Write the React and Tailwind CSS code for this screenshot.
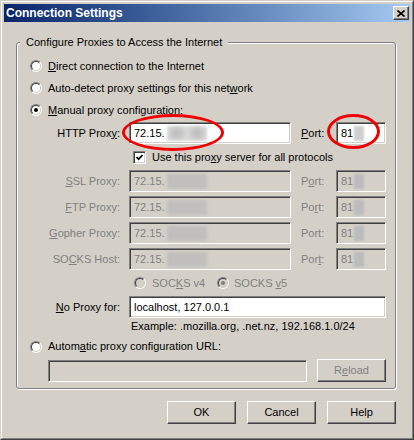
import React from "react";

const Radio = ({ checked, disabled }) => (
  <div className="w-[12px] h-[12px] flex-none rounded-full border border-t-[#808080] border-l-[#808080] border-r-white border-b-white">
    <div
      className={
        "w-full h-full rounded-full border border-t-[#404040] border-l-[#404040] border-r-[#d4d0c8] border-b-[#d4d0c8] flex items-center justify-center " +
        (disabled ? "bg-[#d4d0c8]" : "bg-white")
      }
    >
      {checked && (
        <div className={"w-[4px] h-[4px] rounded-full " + (disabled ? "bg-[#808080]" : "bg-black")} />
      )}
    </div>
  </div>
);

const Field = ({ className, disabled, children }) => (
  <div
    className={
      "h-[22px] flex-none flex items-center pl-[4px] overflow-hidden border border-t-[#808080] border-l-[#808080] border-r-white border-b-white shadow-[inset_1px_1px_0_#404040,inset_-1px_-1px_0_#d4d0c8] " +
      (disabled ? "bg-[#d4d0c8] text-[#808080] " : "bg-white text-black ") +
      className
    }
  >
    {children}
  </div>
);

const HostBlur = ({ disabled }) =>
  disabled ? (
    <span className="ml-[2px] w-[40px] h-[15px] bg-[#c0bfbd] blur-[1.5px] rounded-[2px]" />
  ) : (
    <span className="ml-[2px] w-[40px] h-[15px] bg-[#dadada] blur-[1px] flex items-center justify-around">
      <span className="w-[14px] h-[12px] rounded-full bg-[#c0c0c0] blur-[2px]" />
      <span className="w-[14px] h-[12px] rounded-full bg-[#c0c0c0] blur-[2px]" />
    </span>
  );

const PortBlur = ({ disabled }) => (
  <span
    className={
      "ml-[1px] w-[10px] h-[15px] blur-[1px] " + (disabled ? "bg-[#bcbcbc]" : "bg-[#cfcfcf]")
    }
  />
);

const Button = ({ children, disabled, className }) => (
  <div
    className={
      "h-[23px] flex items-center justify-center bg-[#d4d0c8] border border-t-white border-l-white border-r-[#404040] border-b-[#404040] shadow-[inset_-1px_-1px_0_#808080,inset_1px_1px_0_#d4d0c8] " +
      (disabled ? "text-[#808080] " : "text-black ") +
      className
    }
  >
    {children}
  </div>
);

const ProxyRow = ({ label, portLabel, className, disabled }) => (
  <div className={"h-[22px] flex items-center " + className}>
    <div className={"w-[103px] text-right " + (disabled ? "text-[#808080]" : "text-black")}>{label}</div>
    <Field className="ml-[9px] w-[162px]" disabled={disabled}>
      <span>72.15.</span>
      <HostBlur disabled={disabled} />
    </Field>
    <div className={"ml-[10px] w-[35px] " + (disabled ? "text-[#808080]" : "text-black")}>{portLabel}</div>
    <Field className="w-[50px]" disabled={disabled}>
      <span>81</span>
      <PortBlur disabled={disabled} />
    </Field>
  </div>
);

export default function App() {
  return (
    <div className="relative w-[414px] h-[440px] overflow-hidden font-['Liberation_Sans',Arial,sans-serif] text-[11px] leading-[13px] text-black">
      <div className="w-full h-full bg-[#d4d0c8] border border-t-[#d4d0c8] border-l-[#d4d0c8] border-r-[#404040] border-b-[#404040]">
        <div className="w-full h-full border border-t-white border-l-white border-r-[#808080] border-b-[#808080] p-[2px] flex flex-col">
          {/* Title bar */}
          <div className="h-[18px] flex-none bg-linear-to-r from-[#0a246a] to-[#a6caf0] flex items-center justify-between pl-[2px] pr-[1px]">
            <span className="text-white font-bold text-[12px] leading-[14px]">Connection Settings</span>
            <div className="w-[16px] h-[14px] flex items-center justify-center bg-[#d4d0c8] border border-t-white border-l-white border-r-[#404040] border-b-[#404040] shadow-[inset_-1px_-1px_0_#808080]">
              <svg width="8" height="7" viewBox="0 0 8 7">
                <path d="M0.5 0.5 L7.5 6.5 M7.5 0.5 L0.5 6.5" stroke="#000" strokeWidth="1.6" fill="none" />
              </svg>
            </div>
          </div>

          {/* Group box */}
          <div className="relative mt-[20px] ml-[12px] w-[380px] h-[347px] flex-none rounded-[3px] border border-[#808080] shadow-[inset_1px_1px_0_#fff,1px_1px_0_#fff]">
            <div className="absolute left-[3px] -top-[7px] px-[6px] bg-[#d4d0c8]">
              Configure Proxies to Access the Internet
            </div>
            <div className="flex flex-col pt-[12px]">
              <div className="h-[22px] flex items-center ml-[13px] gap-[6px]">
                <Radio />
                <span>
                  <u>D</u>irect connection to the Internet
                </span>
              </div>
              <div className="h-[22px] flex items-center ml-[13px] gap-[6px]">
                <Radio />
                <span>
                  Auto-detect proxy settings for this net<u>w</u>ork
                </span>
              </div>
              <div className="h-[22px] flex items-center ml-[13px] gap-[6px]">
                <Radio checked />
                <span>
                  <u>M</u>anual proxy configuration:
                </span>
              </div>

              <ProxyRow
                className="mt-[1px]"
                label={
                  <>
                    HTTP Prox<u>y</u>:
                  </>
                }
                portLabel={
                  <>
                    <u>P</u>ort:
                  </>
                }
              />

              <div className="mt-[3px] h-[20px] flex items-center ml-[116px] gap-[6px]">
                <div className="w-[13px] h-[13px] flex-none flex items-center justify-center bg-white border border-t-[#808080] border-l-[#808080] border-r-white border-b-white shadow-[inset_1px_1px_0_#404040,inset_-1px_-1px_0_#d4d0c8]">
                  <svg width="7" height="7" viewBox="0 0 7 7">
                    <path d="M0.5 3 L2.6 5.2 L6.6 1" stroke="#000" strokeWidth="1.7" fill="none" />
                  </svg>
                </div>
                <span>
                  Use this pro<u>x</u>y server for all protocols
                </span>
              </div>

              <ProxyRow
                disabled
                className="mt-[3px]"
                label={
                  <>
                    <u>S</u>SL Proxy:
                  </>
                }
                portLabel={
                  <>
                    P<u>o</u>rt:
                  </>
                }
              />
              <ProxyRow
                disabled
                className="mt-[4px]"
                label={
                  <>
                    <u>F</u>TP Proxy:
                  </>
                }
                portLabel={
                  <>
                    Po<u>r</u>t:
                  </>
                }
              />
              <ProxyRow
                disabled
                className="mt-[4px]"
                label={
                  <>
                    <u>G</u>opher Proxy:
                  </>
                }
                portLabel={<>Port:</>}
              />
              <ProxyRow
                disabled
                className="mt-[4px]"
                label={
                  <>
                    SO<u>C</u>KS Host:
                  </>
                }
                portLabel={
                  <>
                    Por<u>t</u>:
                  </>
                }
              />

              <div className="h-[26px] flex items-center text-[#808080]">
                <div className="ml-[117px] w-[83px] flex items-center gap-[6px]">
                  <Radio disabled />
                  <span>
                    SOC<u>K</u>S v4
                  </span>
                </div>
                <div className="flex items-center gap-[5px]">
                  <Radio disabled checked />
                  <span>
                    SOCKS <u>v</u>5
                  </span>
                </div>
              </div>

              <div className="h-[22px] flex items-center">
                <div className="w-[103px] text-right">
                  <u>N</u>o Proxy for:
                </div>
                <Field className="ml-[9px] w-[257px]">
                  <span>localhost, 127.0.0.1</span>
                </Field>
              </div>

              <div className="h-[16px] flex items-center ml-[114px]">
                Example: .mozilla.org, .net.nz, 192.168.1.0/24
              </div>

              <div className="h-[25px] flex items-center ml-[13px] gap-[6px]">
                <Radio />
                <span>
                  Autom<u>a</u>tic proxy configuration URL:
                </span>
              </div>

              <div className="h-[23px] flex items-center ml-[31px]">
                <Field className="w-[259px]" disabled>
                  <span></span>
                </Field>
                <Button disabled className="ml-[10px] w-[69px]">
                  <span>
                    R<u>e</u>load
                  </span>
                </Button>
              </div>
            </div>
          </div>

          {/* Dialog buttons */}
          <div className="mt-[12px] flex justify-end gap-[11px] pr-[14px]">
            <Button className="w-[69px]">OK</Button>
            <Button className="w-[69px]">Cancel</Button>
            <Button className="w-[69px]">Help</Button>
          </div>
        </div>
      </div>

      {/* Red annotation ellipses */}
      <div className="absolute left-[122px] top-[114px] w-[102px] h-[37px] rounded-[50%] border-[3px] border-[#f00000]" />
      <div className="absolute left-[327px] top-[114px] w-[53px] h-[35px] rounded-[50%] border-[3px] border-[#f00000]" />
    </div>
  );
}
